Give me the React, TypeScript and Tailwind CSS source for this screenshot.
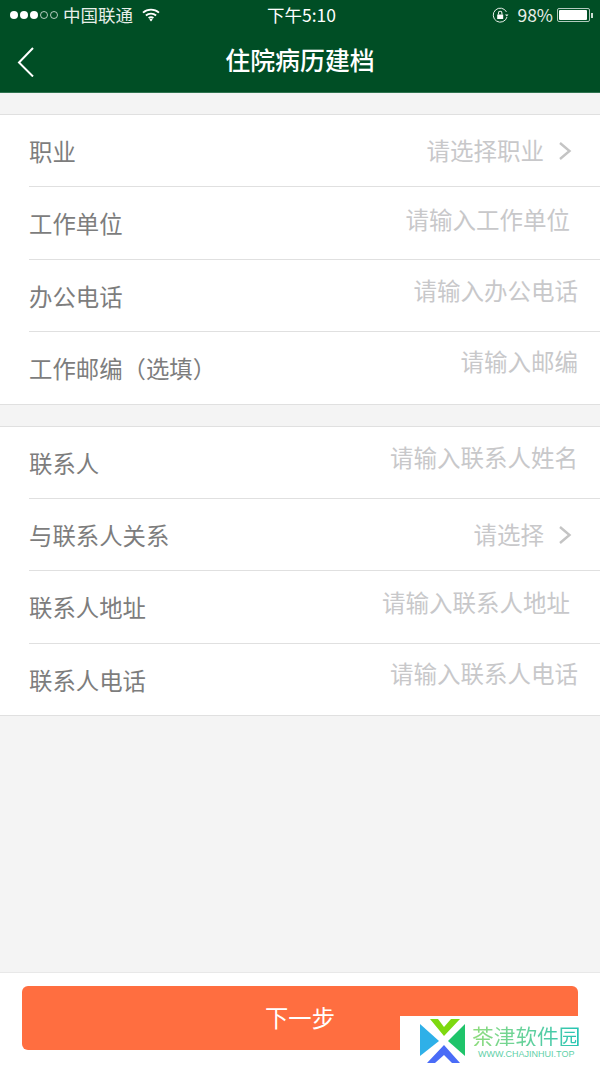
const cjk = '"Noto Sans CJK SC", "Liberation Sans", sans-serif';

type RowProps = {
	label: string;
	hint: string;
	arrow?: boolean;
	hintClass: string;
	heightClass: string;
	last?: boolean;
};

const Chevron = () => (
	<svg width="14" height="20" viewBox="0 0 14 20" className="ml-[14px]" fill="none">
		<path d="M2 2l9.500 8L2 18" stroke="#c4c4c4" strokeWidth="2.400" />
	</svg>
);

const Row = ({ label, hint, arrow, hintClass, heightClass, last }: RowProps) => (
	<div className="pl-[29px]">
		<div className={`flex items-center justify-between ${last ? '' : 'border-b border-[#e0e0e0]'} ${heightClass}`}>
			<span className="pt-[2px] text-[23.400px] leading-none text-[#7d7d7d]">{label}</span>
			<div className={`flex items-center text-[23.500px] leading-none text-[#c8c8ca] ${hintClass}`}>
				<span>{hint}</span>
				{arrow && <Chevron />}
			</div>
		</div>
	</div>
);

const StatusBar = () => (
	<div className="flex h-[30px] items-center justify-between pl-[10px] pr-[7px] text-[#e8efe9]">
		<div className="flex w-[200px] items-center">
			<div className="flex items-center gap-[2px]">
				<span className="h-[8px] w-[8px] rounded-full bg-white" />
				<span className="h-[8px] w-[8px] rounded-full bg-white" />
				<span className="h-[8px] w-[8px] rounded-full bg-white" />
				<span className="h-[8px] w-[8px] rounded-full border border-white/70" />
				<span className="h-[8px] w-[8px] rounded-full border border-white/70" />
			</div>
			<span className="ml-[5px] text-[17.500px] leading-none">中国联通</span>
			<svg width="18" height="14" viewBox="0 0 18 14" className="ml-[9px]" fill="none" stroke="#fff" strokeWidth="1.900">
				<path d="M1 4.600c4.600-4 11.400-4 16 0" />
				<path d="M3.900 7.500c2.900-2.500 7.300-2.500 10.200 0" />
				<path d="M6.600 10.100c1.400-1.100 3.400-1.100 4.800 0" />
				<path d="M9 13.500l-1.700-2c1-.6 2.400-.6 3.400 0z" fill="#fff" stroke="none" />
			</svg>
		</div>
		<span className="text-[17.500px] leading-none text-white">下午5:10</span>
		<div className="flex w-[200px] items-center justify-end">
			<svg width="17" height="17" viewBox="0 0 17 17" fill="none" stroke="#e8efe9" strokeWidth="1">
				<path d="M14.500 5A7 7 0 1 0 15 10" />
				<path d="M13 7.500h3.500L14.800 9.500z" fill="#e8efe9" stroke="none" />
				<rect x="5.200" y="7.500" width="6" height="4.500" fill="#fff" stroke="none" />
				<path d="M6.500 7.500V6a1.700 1.700 0 0 1 3.400 0v1.500" strokeWidth="1.100" />
			</svg>
			<span className="ml-[8px] text-[17.500px] leading-none">98%</span>
			<div className="ml-[4px] h-[14px] w-[33px] rounded-[2px] border border-white/70 p-[1px]">
				<div className="h-full w-[95%] rounded-[1px] bg-white" />
			</div>
			<div className="ml-[1px] h-[5px] w-[2px] bg-white/80" />
		</div>
	</div>
);

const Watermark = () => (
	<div className="absolute bottom-0 right-0 flex h-[50px] w-[200px] items-center bg-white pl-[20px]">
		<svg width="46" height="46" viewBox="0 0 46 46">
			<path d="M10 1h8l6 8 7-8h9L24 18z" fill="#7ed90f" />
			<path d="M0 6l19 17L0 38z" fill="#2eb0e8" />
			<path d="M45 6L28 23l17 15z" fill="#1fc46a" />
			<path d="M7 45h8l9-8 8 8h8L24 27z" fill="#4a6cf7" />
		</svg>
		<div className="ml-[6px] flex flex-col pt-[1px]">
			<span className="bg-gradient-to-r from-[#8fdc7c] to-[#1fc4b4] bg-clip-text text-[21.700px] leading-[21px] text-transparent">
				茶津软件园
			</span>
			<span className="mt-[3px] text-center text-[9px] leading-[10px] text-[#5fd0a8]" style={{ fontFamily: '"Liberation Sans", sans-serif' }}>
				WWW.CHAJINHUI.TOP
			</span>
		</div>
	</div>
);

export default function App() {
	return (
		<main className="relative flex h-[1066px] w-[600px] flex-col overflow-hidden bg-[#f4f4f4]" style={{ fontFamily: cjk }}>
			<header className="h-[93px] border-b border-[#2f7350] bg-[#004e25]">
				<StatusBar />
				<div className="relative flex h-[62px] items-center justify-center">
					<svg width="18" height="30" viewBox="0 0 18 30" className="absolute left-[17px] top-[17px]" fill="none">
						<path d="M16 1L2 15.500l14 14" stroke="#fff" strokeWidth="2" />
					</svg>
					<h1 className="pb-[3px] text-[24.900px] leading-none font-medium text-white">住院病历建档</h1>
				</div>
			</header>

			<section className="mt-[21px] border-y border-[#e0e0e0] bg-white">
				<Row label="职业" hint="请选择职业" arrow hintClass="pr-[28px]" heightClass="h-[72px]" />
				<Row label="工作单位" hint="请输入工作单位" hintClass="pr-[30px] pb-[7px]" heightClass="h-[73px]" />
				<Row label="办公电话" hint="请输入办公电话" hintClass="pr-[22px] pb-[10px]" heightClass="h-[72px]" />
				<Row label="工作邮编（选填）" hint="请输入邮编" hintClass="pr-[22px] pb-[12px]" heightClass="h-[72px]" last />
			</section>

			<section className="mt-[21px] border-y border-[#e0e0e0] bg-white">
				<Row label="联系人" hint="请输入联系人姓名" hintClass="pr-[22px] pb-[10px]" heightClass="h-[72px]" />
				<Row label="与联系人关系" hint="请选择" arrow hintClass="pr-[28px]" heightClass="h-[72px]" />
				<Row label="联系人地址" hint="请输入联系人地址" hintClass="pr-[30px] pb-[8px]" heightClass="h-[73px]" />
				<Row label="联系人电话" hint="请输入联系人电话" hintClass="pr-[22px] pb-[12px]" heightClass="h-[71px]" last />
			</section>

			<div className="flex-1" />

			<footer className="h-[94px] border-t border-[#e8e8e8] bg-white px-[22px] pt-[13px]">
				<button className="h-[64px] w-full rounded-[6px] bg-[#ff6e40] pb-[2px] text-[23.300px] text-white">下一步</button>
			</footer>

			<Watermark />
		</main>
	);
}
